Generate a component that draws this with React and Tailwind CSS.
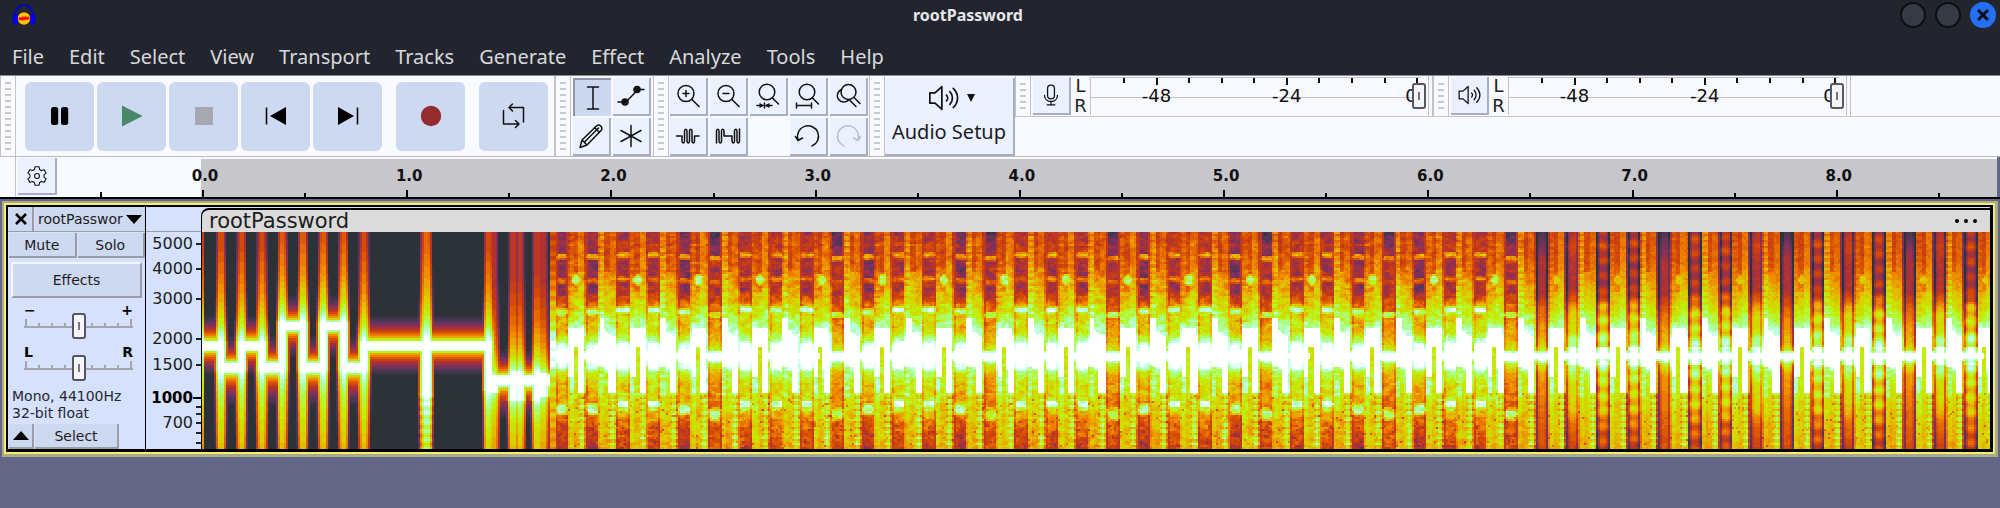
import React, { useMemo } from "react";

/* ---------- spectrogram ---------- */

const WIDTH = 1788;
const HEIGHT = 216;
const CELL = 2;
const SLOT = 30.63;
const SONG_START = 349;
const SLOT_ORIGIN = 414.7;

const STOPS = [
  [0, 45, 50, 56],
  [0.1, 74, 54, 86],
  [0.24, 134, 48, 92],
  [0.34, 184, 50, 40],
  [0.44, 216, 78, 0],
  [0.56, 240, 136, 0],
  [0.66, 222, 200, 0],
  [0.74, 196, 236, 0],
  [0.83, 168, 255, 120],
  [0.91, 190, 255, 236],
  [1, 255, 255, 255],
];
const LEVELS = 28;

function lookup(table, x) {
  if (x <= table[0][0]) return table[0][1];
  for (let i = 1; i < table.length; i++) {
    if (x <= table[i][0]) {
      const [x0, y0] = table[i - 1];
      const [x1, y1] = table[i];
      return y0 + ((y1 - y0) * (x - x0)) / (x1 - x0);
    }
  }
  return table[table.length - 1][1];
}

function levelColor(level) {
  const v = level / LEVELS;
  const channel = (c) => Math.round(lookup(STOPS.map((s) => [s[0], s[c]]), v));
  return `rgb(${channel(1)},${channel(2)},${channel(3)})`;
}

function noise(a, b) {
  const s = Math.sin(a * 127.1 + b * 311.7) * 43758.5453;
  return s - Math.floor(s);
}

function smoothNoise(x, y) {
  const i = Math.floor(x);
  const j = Math.floor(y);
  const fx = x - i;
  const fy = y - j;
  const top = noise(i, j) * (1 - fx) + noise(i + 1, j) * fx;
  const bottom = noise(i, j + 1) * (1 - fx) + noise(i + 1, j + 1) * fx;
  return top * (1 - fy) + bottom * fy - 0.5;
}

const TONE = [[3, 1.05], [4.5, 0.9], [6, 0.74], [9, 0.56], [13, 0.42], [18, 0.27], [24, 0.12], [30, 0]];
const ABOVE = [[0, 1], [6, 0.9], [14, 0.8], [26, 0.7], [48, 0.58], [95, 0.43]];
const BELOW = [[0, 1], [8, 0.9], [25, 0.8], [45, 0.74], [85, 0.62]];

const A = 113;
const B = 134;
const C = 94;
const D = 147;
const TONES = [
  [0, 19, A], [19, 40, B], [40, 60, A], [60, 80, B], [80, 101, C], [101, 121, B],
  [121, 142, C], [142, 162, B], [162, 286, A], [286, 349, D],
];
const PULSES = [
  [0, 2, A, A, 0], [19, 5, A, B, 0], [39.7, 5, A, B, 0], [60, 5, A, B, 0], [80.3, 5, C, B, 0],
  [101, 5, C, B, 0], [121.3, 5, C, B, 0], [141.7, 5, C, B, 0], [162, 5, A, B, 0],
  [224.5, 6, A, 156, 0.06], [286.5, 5, A, 154, 0], [292, 5, 146, 156, -0.12],
  [311, 5, 142, 163, -0.08], [318, 5, 142, 163, -0.08], [335, 5, 142, 163, -0.06], [341, 6, 144, 160, -0.12],
];

function introLevel(x, y) {
  let v = 0;
  for (const [x0, x1, line] of TONES) {
    if (x >= x0 && x < x1) {
      const stretch = y > line && line > 120 ? 1.3 : 1;
      v = lookup(TONE, Math.abs(y - line) / stretch);
    }
  }
  for (const [center, half, top, bottom, gain] of PULSES) {
    const dx = Math.abs(x - center);
    if (dx > half + 2) continue;
    let p = 1.05;
    if (y < top - 4) p = lookup(ABOVE, top - 4 - y) + gain;
    else if (y > bottom + 4) p = lookup(BELOW, y - bottom - 4) + gain;
    if (gain > 0 && y > 160) p += 0.06 * Math.cos((y / 9) * Math.PI * 2);
    p -= dx > half * 0.4 ? ((dx - half * 0.4) / half) * 0.5 : 0;
    if (dx > half) p -= 0.2;
    v = Math.max(v, p);
  }
  return v;
}

const KINDS = {
  "-2": 1, "-1": 1, 0: 0, 1: 0, 2: 1, 3: 2, 4: 0, 5: 0, 6: 0, 7: 2, 8: 1, 9: 0, 10: 0, 11: 1, 12: 2,
  13: 0, 14: 0, 15: 0, 16: 2, 17: 1, 18: 0, 19: 0, 20: 1, 21: 2, 22: 0, 23: 0, 24: 1, 25: 2, 26: 1,
  27: 0, 28: 0, 29: 2,
};

const HELD = [
  [0, 0.3], [14, 0.37], [34, 0.3], [58, 0.31], [68, 0.46], [74, 0.6], [84, 0.7], [100, 0.72],
  [108, 0.88], [112, 1.06], [134, 1.06], [139, 0.84], [150, 0.72], [176, 0.67], [190, 0.52], [216, 0.4],
];
const THIN = [
  [0, 0.1], [16, 0.24], [30, 0.32], [60, 0.32], [74, 0.46], [90, 0.56], [110, 0.64], [118, 0.78], [120, 1.02],
  [127, 1.02], [131, 0.78], [142, 0.6], [170, 0.52], [216, 0.44],
];
const BODY = [
  [0, 0.47], [30, 0.5], [55, 0.6], [75, 0.7], [90, 0.8], [102, 0.92], [108, 1.05], [131, 1.05],
  [140, 0.82], [165, 0.73], [190, 0.66], [216, 0.62],
];

function box(x, y, x0, x1, y0, y1) {
  return x >= x0 && x <= x1 && y >= y0 && y <= y1;
}

function spot(x, y, cx, cy, rx, ry) {
  const d = Math.hypot(Math.max(0, Math.abs(x - cx) - rx * 0.6) / rx, (y - cy) / ry);
  return d < 0.8 ? 1 : d < 1.3 ? 0.82 : 0;
}

function lateHeld(u, y, k, line) {
  const dark = k % 4 === 2;
  const dx = Math.abs(u - 6.5);
  if (line < 4) return 1.02;
  let v = lookup(dark ? THIN : HELD, y);
  if (!dark && y > 104 && y < 144) v = Math.min(v, line < 10 ? 1 : 0.86);
  if (!dark && y < 68) v += 0.03;
  if (!dark && k % 3 !== 1) v += 0.07 * Math.cos((y / 15) * Math.PI * 2 + k);
  v -= dx > 2.5 ? (dx - 2.5) * 0.07 : 0;
  if (dx > 4.5 && line > 8) v -= y < 80 ? 0.14 : 0.08;
  return line < 6 ? Math.max(v, 0.86) : v;
}

function songLevel(x, y) {
  const k = Math.floor((x - SLOT_ORIGIN) / SLOT);
  const u = x - SLOT_ORIGIN - k * SLOT;
  const late = k >= 30;
  const row = Math.floor(y / CELL);
  const grain = noise(Math.floor(x / 2), row) - 0.5;
  const soft = smoothNoise(x / 5, y / 2.6);
  const bead = Math.cos((y / 6.2) * Math.PI * 2);
  const line = Math.abs(y - 123);
  let v;

  if (u < 12.6) {
    if (late) return lateHeld(u, y, k, line) + soft * 0.06;
    const kind = KINDS[k] ?? 0;
    v = lookup(kind === 2 ? THIN : HELD, y);
    if (kind === 1) v -= line < 7 ? 0 : 0.08;
    const shift = kind * 1.7;
    v = Math.max(v, spot(u, y, 6.5, 23 + shift, 5, 2.2) * (0.64 - kind * 0.04));
    v = Math.max(v, spot(u, y, 6.5, 47 + shift, 5, 2.2) * (0.54 - kind * 0.04));
    v = Math.max(v, spot(u, y, 6.5, 78 + shift * 1.5, 5, 3) * (0.93 - kind * 0.08));
    v = Math.max(v, spot(u, y, 6.5, 171 + shift * 3, 4, 5) * (0.93 - kind * 0.07));
    if (v < 1) v += grain * 0.06 + soft * (y > 95 && y < 150 ? 0.08 : 0.2);
    if (y > 188 && grain > 0.42) v -= 0.14;
    if ((u < 1.6 || u > 11.4) && line > 5) v = Math.max(v, 0.46) - 0.09;
    return v;
  }

  v = lookup(BODY, y);
  const even = k % 2 === 0;
  const lively = (late ? 0.07 : 0.16) * soft + grain * 0.04;

  if (even) {
    if (u < 18) v += y < 90 ? -0.03 + bead * 0.03 : 0.04;
    else if (u < 22.5) {
      v += y < 60 ? -0.08 : 0;
      if (y > 114 && y < 216) v = Math.min(v, 0.74 - (y > 165 ? 0.08 : 0));
    } else if (u < 28.5) v += 0.04;
    v = Math.max(v, spot(u, y, 21, 48, 2.6, 4) * (late ? 0.66 : 0.82));
    if (box(u, y, 14, 28.5, 96, 113)) v = 1.02;
    if (box(u, y, 13.2, 18.4, 96, 143)) v = 1.02;
    if (box(u, y, 13.6, 17.8, 146, 160)) v = 0.88;
  } else {
    if (u < 18.5) v += y < 86 ? 0.07 + bead * 0.05 : 0;
    else if (u < 23) v += y < 40 ? -0.07 : 0.02;
    if (box(u, y, 13, 18.8, 86, 106)) v = 1.05;
    if (y > 98 + (u - 18) * 0.8 && y < 131 && u > 18) v = Math.max(v, 1.02);
    if (y > 134 && y < 165 && u < 18) v = 0.82 + bead * 0.04;
    if (y > 136 && u >= 18 && u < 22.5) v -= 0.05;
  }

  if (u > 22.8 && u < 30.2) {
    if (y > 104 && y < 161) v = u > 29 ? 0.9 : 1.05;
    else if (y >= 161) v = 0.78 + bead * 0.08 - Math.abs(u - 26.5) * 0.04;
  }
  if (line < 4 && !(even && u > 18.6 && u < 22.6)) v = 1.05;

  if (v < 1) v += lively;
  if (y > 160 && noise(row * 3, Math.floor(x / 2)) > 0.97) v -= 0.16;
  if (u > 29.2 && line > 4) v -= late ? 0.26 : 0.12;
  if (u < 13.6 && line > 6) v -= late ? 0.12 : 0.06;
  return v;
}

function buildPaths() {
  const paths = Array.from({ length: LEVELS + 1 }, () => []);
  for (let y = 0; y < HEIGHT; y += CELL) {
    let start = 0;
    let current = -1;
    for (let x = 0; x <= WIDTH; x += CELL) {
      let level = -2;
      if (x < WIDTH) {
        let v;
        if (x < SONG_START - 2) v = introLevel(x + 1, y + 1);
        else if (x < SONG_START + 5) v = lookup(BODY, y) - 0.06 + 0.05 * Math.cos(y / 1.6);
        else v = songLevel(x + 1, y + 1);
        level = Math.round(Math.max(0, Math.min(1, v)) * LEVELS);
      }
      if (level !== current) {
        if (current > 0) paths[current].push(`M${start} ${y}h${x - start}v2h${start - x}z`);
        start = x;
        current = level;
      }
    }
  }
  return paths.map((p) => p.join(""));
}

function Spectrogram() {
  const paths = useMemo(buildPaths, []);
  return (
    <svg
      role="img"
      aria-label="Spectrogram of rootPassword"
      className="block h-[217px] w-full bg-[#2d3238]"
      viewBox={`0 0 ${WIDTH} ${HEIGHT}`}
      preserveAspectRatio="none"
      shapeRendering="crispEdges"
    >
      {paths.map((d, i) => (d ? <path key={i} d={d} fill={levelColor(i)} /> : null))}
    </svg>
  );
}

/* ---------- icons ---------- */

function Icon({ size = "size-7", children }) {
  return (
    <svg
      viewBox="0 0 28 28"
      className={size}
      fill="none"
      stroke="#111"
      strokeWidth="1.5"
      strokeLinecap="round"
      strokeLinejoin="round"
      aria-hidden="true"
    >
      {children}
    </svg>
  );
}

const Logo = () => (
  <svg viewBox="0 0 24 22" className="h-[22px] w-6" aria-hidden="true">
    <path d="M3.5 12C3 5 7 1.2 12 1.2S21 5 20.5 12" fill="none" stroke="#0000d8" strokeWidth="1.8" />
    <rect x="0.6" y="10" width="5.4" height="10.5" rx="2.6" fill="#0000e8" />
    <rect x="18" y="10" width="5.4" height="10.5" rx="2.6" fill="#0000e8" />
    <circle cx="12" cy="14.5" r="6.2" fill="#ffc20a" />
    <path d="M6.500 14.500l1.500-1 1.500.5 1.500-1.500 1 1 1.500-1 1.500 1 1.500-.5 1 1.500-1.500 1-1.500-.5-1.500 1-1-.5-1.500 1-1.500-1-1.500.5z" fill="#f00" stroke="#f01800" strokeWidth="0.8" />
  </svg>
);

const SPEAKER_PATH =
  "M2.5 9.5v9H7l6 5.5V4L7 9.5zM17 11.5c1.500 1.500 1.500 3.500 0 5M20 8.500c3 3 3 8 0 11M23 5.500c5 5 5 12 0 17";

const ICONS = {
  pause: (
    <Icon>
      <rect x="5" y="5" width="7.200" height="18" rx="2.500" fill="#000" stroke="none" />
      <rect x="15" y="5" width="7.200" height="18" rx="2.500" fill="#000" stroke="none" />
    </Icon>
  ),
  play: <Icon><path d="M4 3.500v21L24.500 14z" fill="#47896b" stroke="none" /></Icon>,
  stop: <Icon><rect x="5" y="5" width="18" height="18" fill="#a5a9b0" stroke="none" /></Icon>,
  start: (
    <Icon>
      <path d="M4.500 5.500v17" stroke="#000" strokeLinecap="butt" />
      <path d="M24 5v18L8 14z" fill="#000" stroke="none" />
    </Icon>
  ),
  end: (
    <Icon>
      <path d="M23.500 5.500v17" stroke="#000" strokeLinecap="butt" />
      <path d="M4 5v18l16-9z" fill="#000" stroke="none" />
    </Icon>
  ),
  record: <Icon><circle cx="14" cy="14" r="10.200" fill="#932c2c" stroke="none" /></Icon>,
  loop: (
    <Icon>
      <path d="M3.500 8.500V22h15M15.500 18.500l3.500 3.500-3.500 3.500M23.500 20V5.500H9.500M12.500 2L9 5.500 12.500 9" />
    </Icon>
  ),
  ibeam: <Icon><path d="M8.500 3h11M8.500 25h11M14 3v22" /></Icon>,
  envelope: (
    <Icon>
      <path d="M1 20h8L21 7.500h6" />
      <circle cx="8" cy="20" r="3" fill="#111" />
      <circle cx="20" cy="7.500" r="3" fill="#111" />
    </Icon>
  ),
  pencil: (
    <Icon>
      <path d="M3 25.500l2-7.500L20 3.500c2.500-1.500 6 1.500 4.500 4.500L10 23zM5 18l5 5M8 19.500L21.500 6M17.500 5.500l5 5" />
    </Icon>
  ),
  multi: <Icon><path d="M14 3.500v21M4 8.500l20 11M24 8.500l-20 11" /></Icon>,
  zoomIn: (
    <Icon>
      <circle cx="12" cy="11.500" r="8" />
      <path d="M18 17.500l7 7M12 8.500v6M9 11.500h6" />
    </Icon>
  ),
  zoomOut: (
    <Icon>
      <circle cx="12" cy="11.500" r="8" />
      <path d="M18 17.500l7 7M9 11.500h6" />
    </Icon>
  ),
  zoomSel: (
    <Icon>
      <circle cx="13" cy="10" r="7.800" />
      <path d="M18.500 16l6 6M3 23.500h5M13 23.500h5M10.500 21v5" />
      <path d="M5.500 21v5l5-2.500zM15.500 21v5l-5-2.500z" fill="#111" stroke="none" />
    </Icon>
  ),
  zoomFit: (
    <Icon>
      <circle cx="13" cy="10" r="7.800" />
      <path d="M18.500 16l6 6M2.500 23.500h15M2.500 21v5M17.500 21v5" />
    </Icon>
  ),
  zoomToggle: (
    <Icon>
      <circle cx="14.500" cy="10" r="7.500" />
      <path d="M20 15.500l6 6M7.500 7.500a6.500 6.500 0 1 0 7.500 10l7 7" />
    </Icon>
  ),
  trim: (
    <Icon>
      <path d="M2.500 14h5.500v5c0 2.500 2.500 2.500 2.500 0V9c0-2.500 2.500-2.500 2.500 0v10c0 2.500 2.500 2.500 2.500 0V9c0-2.500 2.500-2.500 2.500 0v10c0 2.500 2.500 2.500 2.500 0v-5h4.500" />
    </Icon>
  ),
  silence: (
    <Icon>
      <path d="M2.500 21V9c0-2.500 2.500-2.500 2.500 0v10c0 2.500 2.500 2.500 2.500 0V9c0-2.500 2.500-2.500 2.500 0v5h8v5c0 2.500 2.500 2.500 2.500 0V9c0-2.500 2.500-2.500 2.500 0v10c0 2.500 2.500 2.500 2.500 0V7" />
    </Icon>
  ),
  undo: <Icon><path d="M4 17.500A10.500 10.500 0 1 1 18 24M1.500 14.500l2.500 4 4.500-2.500" /></Icon>,
  redo: <Icon><path d="M24 17.500A10.500 10.500 0 1 0 10 24M26.500 14.500L24 18.500l-4.500-2.500" stroke="#b9bdc8" /></Icon>,
  speaker: <Icon size="size-6"><path d={SPEAKER_PATH} /></Icon>,
  mic: (
    <Icon size="size-6">
      <rect x="10" y="2.500" width="8" height="16" rx="4" />
      <path d="M6.500 14.500c0 9.500 15 9.500 15 0M14 21.500v4M9.500 25.500h9" />
    </Icon>
  ),
  gear: (
    <Icon size="size-5">
      <path d="M11.200 1h5.600l.8 3.800 2.600 1.500 3.700-1.200 2.800 4.800-2.900 2.600v3l2.900 2.600-2.800 4.800-3.700-1.200-2.600 1.500-.8 3.800h-5.600l-.8-3.800-2.600-1.500-3.700 1.200-2.800-4.800 2.900-2.600v-3L1.300 9.900l2.800-4.800 3.700 1.200 2.600-1.500z" />
      <circle cx="14" cy="14" r="3.500" />
    </Icon>
  ),
};

/* ---------- toolbar parts ---------- */

function Grip({ count = 12 }) {
  return (
    <div className="flex w-4 shrink-0 flex-col items-center justify-center gap-[4px] border-x border-[#c4c4c6] bg-[#f9faff]">
      {Array.from({ length: count }, (_, i) => (
        <span key={i} className="h-[2px] w-[6px] bg-[#c9cacd]" />
      ))}
    </div>
  );
}

function TransportButton({ icon, label, className = "" }) {
  return (
    <button
      type="button"
      aria-label={label}
      className={`flex size-[69px] shrink-0 items-center justify-center rounded-md bg-[#cdd9f1] ${className}`}
    >
      {ICONS[icon]}
    </button>
  );
}

function ToolButton({ icon, label, pressed = false }) {
  const look = pressed
    ? "border-t-2 border-l-2 border-[#8f96ab] bg-[#cbd8f0]"
    : "border-r-2 border-b-2 border-[#a6aec3] bg-[#ebf1ff]";
  return (
    <button
      type="button"
      aria-label={label}
      aria-pressed={pressed}
      className={`flex size-[38px] shrink-0 items-center justify-center ${look}`}
    >
      {ICONS[icon]}
    </button>
  );
}

const THUMB =
  "[&::-webkit-slider-thumb]:appearance-none [&::-webkit-slider-thumb]:h-[26px] [&::-webkit-slider-thumb]:w-[14px] [&::-webkit-slider-thumb]:rounded-[3px] [&::-webkit-slider-thumb]:border-2 [&::-webkit-slider-thumb]:border-[#55585e] [&::-webkit-slider-thumb]:bg-[#f6f6fa] [&::-webkit-slider-thumb]:bg-[linear-gradient(#777,#777)] [&::-webkit-slider-thumb]:bg-[length:2px_8px] [&::-webkit-slider-thumb]:bg-center [&::-webkit-slider-thumb]:bg-no-repeat";

function Meter({ icon, label }) {
  return (
    <div className="flex h-10 border-r border-[#c4c4c6]">
      <Grip count={5} />
      <div className="flex items-center pl-[2px]">
        <ToolButton icon={icon} label={label} />
      </div>
      <div className="flex w-[19px] flex-col items-center justify-center font-['DejaVu_Sans',sans-serif] text-lg leading-[20px] text-[#222]">
        <span>L</span>
        <span>R</span>
      </div>
      <div className="relative my-px w-[331px] border-t border-l border-[#c4c4c6] bg-[linear-gradient(#c4c4c6,#c4c4c6)] bg-[length:100%_1px] bg-[position:0_19px] bg-no-repeat">
        <div className="flex h-full pr-[4px] pl-[32px]">
          {Array.from({ length: 10 }, (_, i) => {
            const major = i === 1 || i === 5 || i === 9;
            const text = { 1: "-48", 5: "-24", 9: "0" }[i];
            return (
              <div key={i} className={i === 9 ? "w-px" : "flex-1"}>
                <div className="flex w-[2px] flex-col items-center">
                  <span className={major ? "h-[7px] w-[2px] bg-[#111]" : "h-[5px] w-[2px] bg-[#111]"} />
                  {text && (
                    <span className={`whitespace-nowrap font-['DejaVu_Sans',sans-serif] text-lg leading-[22px] text-[#111] ${i === 9 ? "pr-3" : ""}`}>
                      {text}
                    </span>
                  )}
                </div>
              </div>
            );
          })}
        </div>
        <input
          type="range"
          aria-label={`${label} level`}
          defaultValue="100"
          className={`absolute left-0 top-[5px] h-[26px] w-[335px] appearance-none bg-transparent ${THUMB}`}
        />
      </div>
      <div className="ml-[7px] w-1 border-l border-[#c4c4c6]" />
    </div>
  );
}

function PanelSlider({ left, right, label, className }) {
  return (
    <div className={`pr-3 pl-4 ${className}`}>
      <div className="flex h-4 justify-between font-['DejaVu_Sans',sans-serif] text-sm font-bold leading-4 text-black">
        <span>{left}</span>
        <span>{right}</span>
      </div>
      <div className="relative h-[10px] border-b-2 border-[#a3a6ac]">
        <div className="flex h-full items-end justify-between px-px">
          {Array.from({ length: 9 }, (_, i) => (
            <span key={i} className={i % 8 === 0 ? "h-[7px] w-[2px] bg-[#a3a6ac]" : "h-[3px] w-[2px] bg-[#a3a6ac]"} />
          ))}
        </div>
        <input
          type="range"
          aria-label={label}
          defaultValue="50"
          className={`absolute -top-[5px] left-0 h-[26px] w-full appearance-none bg-transparent ${THUMB}`}
        />
      </div>
    </div>
  );
}

const PANEL_BUTTON = "border-r-2 border-b-2 border-[#9a9da6] bg-[#cdd9f1] text-center text-sm leading-5 text-[#1c1c1c]";

const FREQUENCIES = [
  [37, "5000"], [62, "4000"], [92, "3000"], [132, "2000"], [158, "1500"], [191, "1000"],
  [200, ""], [207, ""], [216, "700"], [226, ""], [236, ""],
];

const MENUS = ["File", "Edit", "Select", "View", "Transport", "Tracks", "Generate", "Effect", "Analyze", "Tools", "Help"];

function TimeRuler() {
  return (
    <div className="flex h-[42px] border-b-2 border-black bg-[#f9faff]">
      <div className="w-4 shrink-0 border-r border-[#c4c4c6]" />
      <button
        type="button"
        aria-label="Timeline options"
        className="mt-px ml-[2px] flex h-[37px] w-[39px] shrink-0 items-center justify-center border-r-2 border-b-2 border-[#a6aec3] bg-[#ebf1ff]"
      >
        {ICONS.gear}
      </button>
      <div className="flex w-[144px] shrink-0 items-end pl-[43px]">
        <span className="h-[5px] w-[2px] bg-black" />
      </div>
      <div className="mt-[2px] flex min-w-0 flex-1 bg-[#c6c6cb] pl-px">
        {Array.from({ length: 18 }, (_, i) => (
          <div key={i} className={`flex min-w-0 flex-col justify-end ${i === 17 ? "flex-[0.58]" : "flex-1"}`}>
            {i % 2 === 0 && (
              <div className="flex w-[6px] justify-center font-['DejaVu_Sans',sans-serif] text-[15px] font-bold leading-5 text-[#111]">
                {`${i / 2}.0`}
              </div>
            )}
            <span className={i % 2 === 0 ? "mt-[4px] h-[7px] w-[2px] bg-black" : "h-[4px] w-[2px] bg-black"} />
          </div>
        ))}
      </div>
      <div className="w-[3px] shrink-0 bg-[#636684]" />
    </div>
  );
}

export default function App() {
  return (
    <div className="min-h-screen w-full overflow-hidden bg-[#636684] font-['Noto_Sans',sans-serif]">
      <header className="bg-[#23252e]">
        <div className="flex h-[30px] items-center pr-1 pl-3">
          <Logo />
          <h1 className="flex-1 text-center text-base font-bold text-[#e6e7ea]">rootPassword</h1>
          <div className="flex items-center gap-[9px]">
            <button type="button" aria-label="Minimize" className="size-[26px] rounded-full border-2 border-[#0d0e12] bg-[#363a45]" />
            <button type="button" aria-label="Maximize" className="size-[26px] rounded-full border-2 border-[#0d0e12] bg-[#363a45]" />
            <button type="button" aria-label="Close" className="flex size-[26px] items-center justify-center rounded-full bg-[#2270f5]">
              <svg viewBox="0 0 12 12" className="size-3" stroke="#0b0d14" strokeWidth="3" aria-hidden="true">
                <path d="M1 1l10 10M11 1L1 11" />
              </svg>
            </button>
          </div>
        </div>
        <nav className="flex h-[45px] items-center gap-[25px] pt-2 pl-[12px] text-xl text-[#d8d9dc]">
          {MENUS.map((name) => (
            <button key={name} type="button">{name}</button>
          ))}
        </nav>
      </header>

      <section aria-label="Toolbars" className="flex border-t border-[#8d8a8d] bg-[#f9faff]">
        <div className="flex h-[81px] min-w-0 flex-1 border-b border-[#b9babd]">
          <Grip />
          <div className="flex shrink-0 items-center gap-[3px] border-r border-[#c4c4c6] pr-[6px] pl-[9px]">
            <TransportButton icon="pause" label="Pause" />
            <TransportButton icon="play" label="Play" />
            <TransportButton icon="stop" label="Stop" />
            <TransportButton icon="start" label="Skip to Start" />
            <TransportButton icon="end" label="Skip to End" />
            <TransportButton icon="record" label="Record" className="ml-[11px]" />
            <TransportButton icon="loop" label="Loop" className="ml-[11px]" />
          </div>
          <Grip />
          <div className="grid shrink-0 grid-cols-2 content-end gap-[2px] px-[2px]">
            <ToolButton icon="ibeam" label="Selection Tool" pressed />
            <ToolButton icon="envelope" label="Envelope Tool" />
            <ToolButton icon="pencil" label="Draw Tool" />
            <ToolButton icon="multi" label="Multi-Tool" />
          </div>
          <Grip />
          <div className="grid shrink-0 grid-cols-5 content-end gap-[2px] px-px">
            <ToolButton icon="zoomIn" label="Zoom In" />
            <ToolButton icon="zoomOut" label="Zoom Out" />
            <ToolButton icon="zoomSel" label="Zoom to Selection" />
            <ToolButton icon="zoomFit" label="Fit Project to Width" />
            <ToolButton icon="zoomToggle" label="Zoom Toggle" />
            <ToolButton icon="trim" label="Trim" />
            <ToolButton icon="silence" label="Silence" />
            <span />
            <ToolButton icon="undo" label="Undo" />
            <ToolButton icon="redo" label="Redo" />
          </div>
          <Grip />
          <button
            type="button"
            className="mt-[2px] flex w-[130px] shrink-0 flex-col items-center border-r-2 border-b-2 border-[#a6aec3] bg-[#ebf1ff] pt-1"
          >
            <span className="flex items-center gap-2 pl-1">
              <Icon size="size-8">
                <path d={SPEAKER_PATH} />
              </Icon>
              <svg viewBox="0 0 8 8" className="size-2" aria-hidden="true"><path d="M0 0h8L4 8z" fill="#111" /></svg>
            </span>
            <span className="mt-1 text-xl text-[#1b1b1f]">Audio Setup</span>
          </button>
          <div className="min-w-0 flex-1">
            <div className="flex border-b border-[#c4c4c6]">
              <Meter icon="mic" label="Record Meter" />
              <Meter icon="speaker" label="Playback Meter" />
            </div>
          </div>
        </div>
      </section>

      <TimeRuler />

      <main className="mx-[2px] mt-[2px] bg-[#a9a98c] pt-[2px] pr-[3px] pb-[3px] pl-[2px]">
        <div className="bg-[#f3ec6c] p-[2px]">
          <div className="flex border-t-2 border-r-[3px] border-b-[3px] border-l-2 border-black bg-[#d5e1fd]">
            <aside aria-label="Track controls" className="flex w-[137px] shrink-0 flex-col font-['DejaVu_Sans',sans-serif]">
              <div className="flex h-[25px] gap-px border-b border-[#9a9da6] pl-px">
                <button type="button" aria-label="Close track" className="flex w-[25px] items-center justify-center border-r-2 border-[#9a9da6] bg-[#cdd9f1]">
                  <svg viewBox="0 0 12 12" className="size-3" stroke="#000" strokeWidth="2.600" aria-hidden="true">
                    <path d="M1 1l10 10M11 1L1 11" />
                  </svg>
                </button>
                <button type="button" className="flex min-w-0 flex-1 items-center justify-between bg-[#cdd9f1] pr-[3px] pl-[3px] text-sm text-[#1c1c1c]">
                  rootPasswor
                  <svg viewBox="0 0 16 9" className="h-[9px] w-4" aria-hidden="true"><path d="M0 0h16L8 9z" /></svg>
                </button>
              </div>
              <div className="flex h-[26px] gap-px pt-px pl-px">
                <button type="button" className={`flex-1 ${PANEL_BUTTON}`}>Mute</button>
                <button type="button" className={`flex-1 ${PANEL_BUTTON}`}>Solo</button>
              </div>
              <button type="button" className={`mx-[3px] mt-[4px] h-9 border-t-2 border-l-2 border-t-[#f2f6ff] border-l-[#f2f6ff] ${PANEL_BUTTON}`}>Effects</button>
              <PanelSlider left="−" right="+" label="Gain" className="mt-[4px]" />
              <PanelSlider left="L" right="R" label="Pan" className="mt-[16px]" />
              <p className="mt-[18px] pl-1 text-sm leading-[17px] text-[#26282d]">
                Mono, 44100Hz
                <br />
                32-bit float
              </p>
              <div className="mt-auto flex h-[25px] gap-px pl-px">
                <button type="button" aria-label="Collapse" className={`flex w-[25px] items-center justify-center ${PANEL_BUTTON}`}>
                  <svg viewBox="0 0 16 9" className="h-[9px] w-4" aria-hidden="true"><path d="M0 9h16L8 0z" /></svg>
                </button>
                <button type="button" className={`w-[84px] ${PANEL_BUTTON}`}>Select</button>
              </div>
            </aside>

            <div className="relative w-14 shrink-0 border-l border-black font-['DejaVu_Sans',sans-serif] text-[#1c1c1c]">
              <div className="h-[25px] border-b border-[#9a9da6]" />
              {FREQUENCIES.map(([top, text]) => (
                <div
                  key={top}
                  className="absolute right-0 flex -translate-y-1/2 items-center gap-[3px]"
                  style={{ top }}
                >
                  <span className={text === "1000" ? "text-[15px] font-bold leading-4 text-black" : "text-base leading-4"}>{text}</span>
                  <span className={text === "1000" ? "-ml-[3px] h-[2px] w-[8px] bg-black" : "h-[2px] w-[5px] bg-[#222]"} />
                </div>
              ))}
            </div>

            <div className="min-w-0 flex-1 pt-px">
              <div className="rounded-tl-lg border-t-2 border-l border-black bg-[#dbdbdb]">
                <div className="flex h-[22px] items-center justify-between pr-[13px] pl-[7px]">
                  <h2 className="font-['DejaVu_Sans',sans-serif] text-[21px] leading-[22px] text-[#1c1c1c]">rootPassword</h2>
                  <button type="button" aria-label="Clip menu" className="flex gap-[5px]">
                    <span className="size-1 rounded-full bg-black" />
                    <span className="size-1 rounded-full bg-black" />
                    <span className="size-1 rounded-full bg-black" />
                  </button>
                </div>
                <Spectrogram />
              </div>
            </div>
          </div>
        </div>
      </main>
    </div>
  );
}
